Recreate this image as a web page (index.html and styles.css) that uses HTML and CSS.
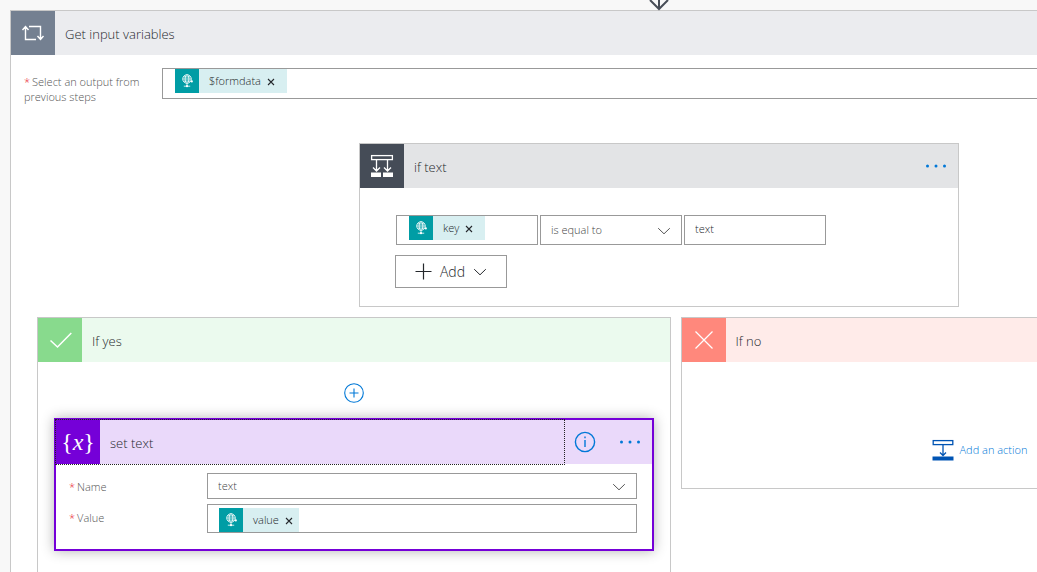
FILE: index.html
```html
<!DOCTYPE html>
<html lang="en">
<head>
<meta charset="utf-8">
<title>Get input variables</title>
<meta name="viewport" content="width=device-width, initial-scale=1">
<link rel="stylesheet" href="styles.css">
</head>
<body>
<svg class="defs" aria-hidden="true">
  <symbol id="globe" viewBox="0 0 16 16">
    <g fill="none" stroke="currentColor" stroke-width="0.800">
      <circle cx="8" cy="6" r="4.300"/>
      <ellipse cx="8" cy="6" rx="1.900" ry="4.300"/>
      <path d="M3.700 6h8.600M4.500 3.900h7M4.500 8.100h7M8 10.300v2.500M4.800 13.200h6.400"/>
    </g>
    <circle cx="12.800" cy="8.400" r="1.100" fill="currentColor"/>
    <circle cx="8" cy="13.200" r="1.100" fill="currentColor"/>
  </symbol>
  <symbol id="chevron" viewBox="0 0 14 8">
    <path d="M1.200 1.200 7 6.800l5.800-5.600" fill="none" stroke="currentColor" stroke-width="1"/>
  </symbol>
  <symbol id="cross" viewBox="0 0 8 8">
    <path d="M1 1l6 6M7 1 1 7" fill="none" stroke="currentColor" stroke-width="1.100"/>
  </symbol>
  <symbol id="dots" viewBox="0 0 22 4">
    <g fill="currentColor"><circle cx="2.500" cy="2" r="1.500"/><circle cx="11" cy="2" r="1.500"/><circle cx="19.500" cy="2" r="1.500"/></g>
  </symbol>
</svg>

<main class="canvas">
  <svg class="connector" viewBox="0 0 22 11" aria-hidden="true">
    <path d="M11 0v9M2 0l9 9 9-9" fill="none" stroke="currentColor" stroke-width="2"/>
  </svg>

  <section class="card scope">
    <header class="card-header scope-header">
      <span class="tile tile-scope">
        <svg width="24" height="18" viewBox="0 0 24 18" fill="none" stroke="currentColor" stroke-width="1.400">
          <path d="M15 15.500H4.500V3M1.500 6l3-3.500 3 3.500M8 2.500h11.500V15M16.500 12l3 3.500 3-3.500"/>
        </svg>
      </span>
      <h1 class="title">Get input variables</h1>
    </header>

    <div class="field field-scope">
      <label class="label" for="source"><span class="required">*</span>Select an output from previous steps</label>
      <div class="token-box token-box-scope">
        <span class="token">
          <span class="token-icon"><svg width="16" height="16"><use href="#globe"/></svg></span>
          <span>$formdata</span>
          <button class="remove" type="button" aria-label="Remove $formdata"><svg width="8" height="8"><use href="#cross"/></svg></button>
        </span>
        <input class="token-input" id="source" type="text">
      </div>
    </div>

    <section class="card condition">
      <header class="card-header condition-header">
        <span class="tile tile-condition">
          <svg width="24" height="24" viewBox="0 0 24 24" fill="none" stroke="currentColor" stroke-width="1.300">
            <rect x="1.600" y="1.600" width="20.800" height="4"/>
            <path d="M6.500 6v11M3 13.500l3.500 3.500 3.500-3.500M17.500 6v11M14 13.500l3.500 3.500 3.500-3.500"/>
            <path d="M1 18.500h10v4.500H1zM13 18.500h10v4.500H13z" fill="currentColor" stroke="none"/>
          </svg>
        </span>
        <h2 class="title">if text</h2>
        <button class="more" type="button" aria-label="More options for if text"><svg width="22" height="4"><use href="#dots"/></svg></button>
      </header>
      <div class="condition-body">
        <div class="expression">
          <div class="token-box">
            <span class="token">
              <span class="token-icon"><svg width="16" height="16"><use href="#globe"/></svg></span>
              <span>key</span>
              <button class="remove" type="button" aria-label="Remove key"><svg width="8" height="8"><use href="#cross"/></svg></button>
            </span>
            <input class="token-input" type="text" aria-label="Left operand">
          </div>
          <div class="select-box">
            <select class="select" aria-label="Operator"><option>is equal to</option></select>
            <svg class="select-arrow" width="14" height="8"><use href="#chevron"/></svg>
          </div>
          <input class="text-input" type="text" value="text" aria-label="Right operand">
        </div>
        <button class="add" type="button">
          <svg width="17" height="17" viewBox="0 0 17 17" fill="none" stroke="currentColor" stroke-width="1.200"><path d="M8.500 0.500v16M0.500 8.500h16"/></svg>
          <span>Add</span>
          <svg width="14" height="8"><use href="#chevron"/></svg>
        </button>
      </div>
    </section>

    <div class="branches">
      <section class="card branch branch-yes">
        <header class="card-header yes-header">
          <span class="tile tile-yes">
            <svg width="24" height="18" viewBox="0 0 24 18" fill="none" stroke="currentColor" stroke-width="1.500"><path d="M2.500 9.500 9.500 16 23.300 2"/></svg>
          </span>
          <h2 class="title">If yes</h2>
        </header>
        <div class="yes-body">
          <button class="insert" type="button" aria-label="Insert a step">
            <svg width="20" height="20" viewBox="0 0 20 20" fill="none" stroke="currentColor" stroke-width="1.100"><circle cx="10" cy="10" r="9.300"/><path d="M10 5.500v9M5.500 10h9"/></svg>
          </button>
          <section class="action">
            <header class="card-header action-header">
              <button class="action-toggle" type="button">
                <span class="tile tile-action"><span>{<i>x</i>}</span></span>
                <span class="title">set text</span>
              </button>
              <button class="info" type="button" aria-label="Information">
                <svg width="22" height="22" viewBox="0 0 22 22" fill="none" stroke="currentColor" stroke-width="1.400"><circle cx="11" cy="11" r="9.600"/><path d="M11 9v7M11 5.500v1.800"/></svg>
              </button>
              <button class="more" type="button" aria-label="More options for set text"><svg width="22" height="4"><use href="#dots"/></svg></button>
            </header>
            <div class="action-body">
              <label class="label" for="name"><span class="required">*</span>Name</label>
              <div class="select-box">
                <select class="select" id="name"><option>text</option></select>
                <svg class="select-arrow" width="14" height="8"><use href="#chevron"/></svg>
              </div>
              <label class="label" for="value"><span class="required">*</span>Value</label>
              <div class="token-box token-box-value">
                <span class="token">
                  <span class="token-icon"><svg width="16" height="16"><use href="#globe"/></svg></span>
                  <span>value</span>
                  <button class="remove" type="button" aria-label="Remove value"><svg width="8" height="8"><use href="#cross"/></svg></button>
                </span>
                <input class="token-input" id="value" type="text">
              </div>
            </div>
          </section>
        </div>
      </section>

      <section class="card branch">
        <header class="card-header no-header">
          <span class="tile tile-no">
            <svg width="20" height="20" viewBox="0 0 20 20" fill="none" stroke="currentColor" stroke-width="1.200"><path d="M1.500 1.500l17 17M18.500 1.500l-17 17"/></svg>
          </span>
          <h2 class="title">If no</h2>
        </header>
        <div class="no-body">
          <button class="add-action" type="button">
            <svg width="22" height="22" viewBox="0 0 22 22" fill="none" stroke="currentColor" stroke-width="1.300">
              <rect x="1.200" y="1.600" width="19.600" height="4"/>
              <path d="M11 6v10.500M8 13.500l3 3 3-3"/>
              <path d="M0.500 17.500h21v4h-21z" fill="currentColor" stroke="none"/>
            </svg>
            <span>Add an action</span>
          </button>
        </div>
      </section>
    </div>
  </section>
</main>
</body>
</html>
```
FILE: styles.css
```css
* {
  box-sizing: border-box;
}

body {
  margin: 0;
  background: #f8f8f8;
  color: #25282c;
  font-family: "Segoe UI", "Open Sans", "Noto Sans", sans-serif;
  font-size: 11px;
  font-weight: 300;
  line-height: 16px;
}

button,
input,
select {
  margin: 0;
  padding: 0;
  border: 0;
  background: none;
  color: inherit;
  font: inherit;
}

svg {
  display: block;
  flex: none;
}

.defs {
  position: absolute;
  width: 0;
  height: 0;
}

/* The designer surface is wider than the window and is clipped on the right. */
.canvas {
  position: relative;
  height: 100vh;
  overflow: hidden;
  padding: 10px 0 0 10px;
}

.connector {
  position: absolute;
  top: 0;
  left: 648px;
  width: 22px;
  height: 11px;
  color: #474d57;
  z-index: 1;
}

.card {
  border: 1px solid #c8c8c8;
  background: #fff;
}

.scope {
  margin-right: -304px;
}

.card-header {
  display: flex;
  align-items: center;
  height: 44px;
}

.tile {
  display: flex;
  align-items: center;
  justify-content: center;
  flex: none;
  width: 44px;
  height: 44px;
  margin-right: 10px;
  color: #fff;
}

.title {
  flex: 1;
  margin: 0;
  padding-top: 1px;
  font-size: 13px;
  font-weight: 300;
  line-height: 20px;
  text-align: left;
}

.scope-header { background: #ebecef; }
.condition-header { background: #e3e4e6; }
.yes-header { background: #ebfaee; }
.no-header { background: #ffebe9; }

.tile-scope { background: #748091; }
.tile-condition { background: #454c57; }
.tile-yes { background: #88da8d; }
.tile-no { background: #ff887c; }

.tile-action {
  background: #7500d8;
  font-family: "Liberation Serif", serif;
  font-size: 24px;
  font-weight: 400;
  line-height: 24px;
}

.label {
  color: #555;
}

.required {
  margin-right: 2px;
  color: #e81123;
}

.field-scope {
  display: flex;
  padding: 13px 0 0 13px;
}

.field-scope .label {
  width: 138px;
  padding: 6px 12px 0 0;
  line-height: 15px;
}

.token-box,
.text-input,
.select {
  border: 1px solid #999;
  background: #fff;
}

.token-box {
  display: flex;
  min-width: 0;
  height: 30px;
  padding-left: 12px;
}

.token-box-scope {
  flex: 1;
  height: 31px;
}

.token {
  display: flex;
  align-items: center;
  gap: 6px;
  height: 24px;
  padding-right: 12px;
  background: #d8eff1;
}

.token-icon {
  display: flex;
  align-items: center;
  justify-content: center;
  width: 24px;
  height: 24px;
  margin-right: 4px;
  background: #009da5;
  color: #fff;
}

.remove {
  padding-top: 2px;
}

.token-input {
  flex: 1;
  min-width: 0;
  outline: 0;
}

.select-box {
  position: relative;
}

.select {
  display: block;
  width: 100%;
  height: 100%;
  padding: 0 30px 0 10px;
  appearance: none;
  color: #444;
}

.select-arrow {
  position: absolute;
  top: calc(50% - 3px);
  right: 11px;
  color: #555;
  pointer-events: none;
}

.more,
.info,
.insert {
  color: #0078d7;
}

.condition {
  width: 600px;
  margin: 39px 0 10px 348px;
}

.condition .more {
  margin-right: 11px;
}

.condition-body {
  padding: 27px 36px 18px 35px;
}

.expression {
  display: grid;
  grid-template-columns: repeat(3, 142px);
  gap: 2px;
  height: 30px;
  margin-left: 1px;
}

.text-input {
  width: 100%;
  padding: 0 10px 2px;
}

.add {
  display: flex;
  align-items: center;
  justify-content: center;
  gap: 8px;
  width: 112px;
  height: 33px;
  margin-top: 10px;
  border: 1px solid #999;
  font-size: 14px;
}

.branches {
  display: grid;
  grid-template-columns: 1fr 1fr;
  align-items: start;
  gap: 10px;
  padding: 0 26px;
}

.yes-body {
  display: flex;
  flex-direction: column;
  gap: 15px;
  padding: 21px 16px 80px;
}

.insert {
  align-self: center;
}

.action {
  border: 2px solid #7500d8;
  background: #fff;
  box-shadow: 0 0 12px rgba(0, 0, 0, 0.3);
}

.action-header {
  background: #ead9fa;
}

.action-toggle {
  display: flex;
  align-items: center;
  flex: 1;
  height: 44px;
  outline: 1px dotted #222;
}

.info {
  margin: 0 23px 0 10px;
}

.action .more {
  margin-right: 11px;
}

.action-body {
  display: grid;
  grid-template-columns: 138px 1fr;
  grid-template-rows: 26px 29px;
  align-items: stretch;
  row-gap: 5px;
  padding: 9px 15px 16px 13px;
}

.action-body .label {
  padding-top: 6px;
}

.token-box-value {
  height: 29px;
  padding: 3px 0 0 11px;
}

.token-box-value .token {
  padding-right: 6px;
}

.no-body {
  display: flex;
  padding: 77px 0 27px 250px;
}

.add-action {
  display: flex;
  align-items: center;
  gap: 6px;
  color: #0054b4;
}

.add-action span {
  color: #0078d7;
}
```
